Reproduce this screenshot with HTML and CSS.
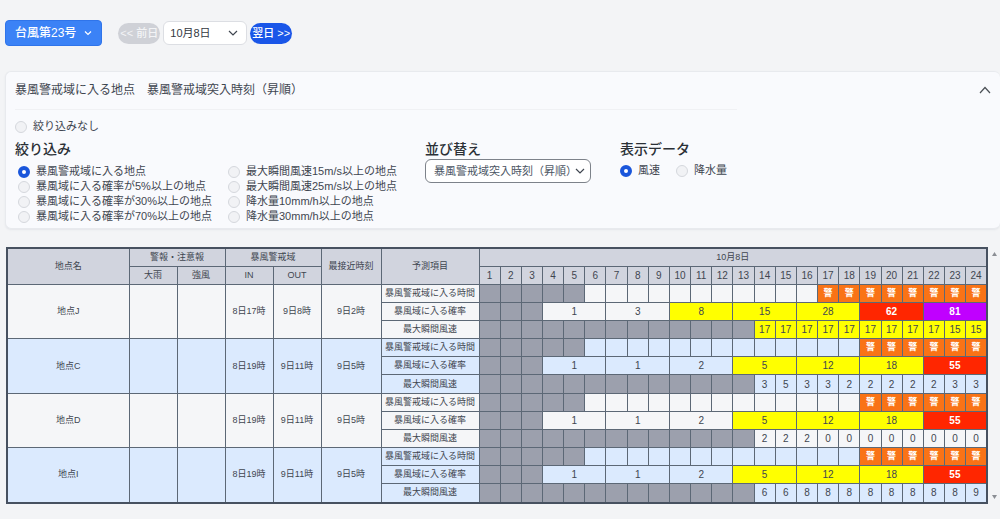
FILE: index.html
```html
<!DOCTYPE html>
<html lang="ja">
<head>
<meta charset="utf-8">
<meta name="viewport" content="width=device-width, initial-scale=1">
<title>台風第23号 暴風警戒域</title>
<link rel="stylesheet" href="styles.css">
</head>
<body>
<header class="toolbar">
  <button class="typhoon" type="button">台風第23号
    <svg class="typhoon-icon" viewBox="0 0 8 8" aria-hidden="true"><path d="M1 2.5 4 5.5 7 2.5"/></svg>
  </button>
  <nav class="days" aria-label="日付">
    <button class="pill" type="button" disabled>&lt;&lt; 前日</button>
    <span class="picker day-picker">
      <select aria-label="表示日"><option>10月8日</option></select>
      <svg class="picker-icon" viewBox="0 0 10 10" aria-hidden="true"><path d="M1 3 5 7 9 3"/></svg>
    </span>
    <button class="pill" type="button">翌日 &gt;&gt;</button>
  </nav>
</header>

<main>
<section class="panel">
  <div class="panel-head">
    <h1 class="panel-title">暴風警戒域に入る地点　暴風警戒域突入時刻（昇順）</h1>
    <button class="collapse" type="button" aria-label="閉じる"><svg viewBox="0 0 12 12" aria-hidden="true"><path d="M1 9 6 3.5 11 9"/></svg></button>
  </div>
  <hr class="rule">
  <label class="option"><input type="radio" name="filter">絞り込みなし</label>
  <div class="controls">
    <fieldset class="group">
      <legend class="group-title">絞り込み</legend>
      <div class="filters">
        <label class="option"><input type="radio" name="filter" checked>暴風警戒域に入る地点</label>
        <label class="option"><input type="radio" name="filter">暴風域に入る確率が5%以上の地点</label>
        <label class="option"><input type="radio" name="filter">暴風域に入る確率が30%以上の地点</label>
        <label class="option"><input type="radio" name="filter">暴風域に入る確率が70%以上の地点</label>
        <label class="option"><input type="radio" name="filter">最大瞬間風速15m/s以上の地点</label>
        <label class="option"><input type="radio" name="filter">最大瞬間風速25m/s以上の地点</label>
        <label class="option"><input type="radio" name="filter">降水量10mm/h以上の地点</label>
        <label class="option"><input type="radio" name="filter">降水量30mm/h以上の地点</label>
      </div>
    </fieldset>
    <div class="group">
      <label class="group-title" for="sort">並び替え</label>
      <span class="picker sort-picker">
        <select id="sort"><option>暴風警戒域突入時刻（昇順）</option></select>
        <svg class="picker-icon" viewBox="0 0 10 10" aria-hidden="true"><path d="M1 3 5 7 9 3"/></svg>
      </span>
    </div>
    <fieldset class="group">
      <legend class="group-title">表示データ</legend>
      <div class="metrics">
        <label class="option"><input type="radio" name="metric" checked>風速</label>
        <label class="option"><input type="radio" name="metric">降水量</label>
      </div>
    </fieldset>
  </div>
</section>

<section class="board">
<table class="forecast">
<colgroup><col class="c-site"><col class="c-time" span="4"><col class="c-near"><col class="c-item"><col span="24"></colgroup>
<thead>
<tr><th rowspan="2">地点名</th><th colspan="2">警報・注意報</th><th colspan="2">暴風警戒域</th><th rowspan="2">最接近時刻</th><th rowspan="2">予測項目</th><th colspan="24">10月8日</th></tr>
<tr><th>大雨</th><th>強風</th><th>IN</th><th>OUT</th><th class="n">1</th><th class="n">2</th><th class="n">3</th><th class="n">4</th><th class="n">5</th><th class="n">6</th><th class="n">7</th><th class="n">8</th><th class="n">9</th><th class="n">10</th><th class="n">11</th><th class="n">12</th><th class="n">13</th><th class="n">14</th><th class="n">15</th><th class="n">16</th><th class="n">17</th><th class="n">18</th><th class="n">19</th><th class="n">20</th><th class="n">21</th><th class="n">22</th><th class="n">23</th><th class="n">24</th></tr>
</thead>
<tbody>
<tr><th rowspan="3">地点J</th><td rowspan="3"></td><td rowspan="3"></td><td rowspan="3">8日17時</td><td rowspan="3">9日8時</td><td rowspan="3">9日2時</td><th>暴風警戒域に入る時間</th>
<td class="p"></td><td class="p"></td><td class="p"></td><td class="p"></td><td class="p"></td><td></td><td></td><td></td><td></td><td></td><td></td><td></td><td></td><td></td><td></td><td></td><td class="w">警</td><td class="w">警</td><td class="w">警</td><td class="w">警</td><td class="w">警</td><td class="w">警</td><td class="w">警</td><td class="w">警</td></tr>
<tr><th>暴風域に入る確率</th><td class="p"></td><td class="p"></td><td class="p"></td><td class="n" colspan="3">1</td><td class="n" colspan="3">3</td><td class="n mid" colspan="3">8</td><td class="n mid" colspan="3">15</td><td class="n mid" colspan="3">28</td><td class="n high" colspan="3">62</td><td class="n extreme" colspan="3">81</td></tr>
<tr><th>最大瞬間風速</th><td class="p"></td><td class="p"></td><td class="p"></td><td class="p"></td><td class="p"></td><td class="p"></td><td class="p"></td><td class="p"></td><td class="p"></td><td class="p"></td><td class="p"></td><td class="p"></td><td class="p"></td><td class="n mid">17</td><td class="n mid">17</td><td class="n mid">17</td><td class="n mid">17</td><td class="n mid">17</td><td class="n mid">17</td><td class="n mid">17</td><td class="n mid">17</td><td class="n mid">17</td><td class="n mid">15</td><td class="n mid">15</td></tr>
</tbody>
<tbody class="alt">
<tr><th rowspan="3">地点C</th><td rowspan="3"></td><td rowspan="3"></td><td rowspan="3">8日19時</td><td rowspan="3">9日11時</td><td rowspan="3">9日5時</td><th>暴風警戒域に入る時間</th>
<td class="p"></td><td class="p"></td><td class="p"></td><td class="p"></td><td class="p"></td><td></td><td></td><td></td><td></td><td></td><td></td><td></td><td></td><td></td><td></td><td></td><td></td><td></td><td class="w">警</td><td class="w">警</td><td class="w">警</td><td class="w">警</td><td class="w">警</td><td class="w">警</td></tr>
<tr><th>暴風域に入る確率</th><td class="p"></td><td class="p"></td><td class="p"></td><td class="n" colspan="3">1</td><td class="n" colspan="3">1</td><td class="n" colspan="3">2</td><td class="n mid" colspan="3">5</td><td class="n mid" colspan="3">12</td><td class="n mid" colspan="3">18</td><td class="n high" colspan="3">55</td></tr>
<tr><th>最大瞬間風速</th><td class="p"></td><td class="p"></td><td class="p"></td><td class="p"></td><td class="p"></td><td class="p"></td><td class="p"></td><td class="p"></td><td class="p"></td><td class="p"></td><td class="p"></td><td class="p"></td><td class="p"></td><td class="n">3</td><td class="n">5</td><td class="n">3</td><td class="n">3</td><td class="n">2</td><td class="n">2</td><td class="n">2</td><td class="n">2</td><td class="n">2</td><td class="n">3</td><td class="n">3</td></tr>
</tbody>
<tbody>
<tr><th rowspan="3">地点D</th><td rowspan="3"></td><td rowspan="3"></td><td rowspan="3">8日19時</td><td rowspan="3">9日11時</td><td rowspan="3">9日5時</td><th>暴風警戒域に入る時間</th>
<td class="p"></td><td class="p"></td><td class="p"></td><td class="p"></td><td class="p"></td><td></td><td></td><td></td><td></td><td></td><td></td><td></td><td></td><td></td><td></td><td></td><td></td><td></td><td class="w">警</td><td class="w">警</td><td class="w">警</td><td class="w">警</td><td class="w">警</td><td class="w">警</td></tr>
<tr><th>暴風域に入る確率</th><td class="p"></td><td class="p"></td><td class="p"></td><td class="n" colspan="3">1</td><td class="n" colspan="3">1</td><td class="n" colspan="3">2</td><td class="n mid" colspan="3">5</td><td class="n mid" colspan="3">12</td><td class="n mid" colspan="3">18</td><td class="n high" colspan="3">55</td></tr>
<tr><th>最大瞬間風速</th><td class="p"></td><td class="p"></td><td class="p"></td><td class="p"></td><td class="p"></td><td class="p"></td><td class="p"></td><td class="p"></td><td class="p"></td><td class="p"></td><td class="p"></td><td class="p"></td><td class="p"></td><td class="n">2</td><td class="n">2</td><td class="n">2</td><td class="n">0</td><td class="n">0</td><td class="n">0</td><td class="n">0</td><td class="n">0</td><td class="n">0</td><td class="n">0</td><td class="n">0</td></tr>
</tbody>
<tbody class="alt">
<tr><th rowspan="3">地点I</th><td rowspan="3"></td><td rowspan="3"></td><td rowspan="3">8日19時</td><td rowspan="3">9日11時</td><td rowspan="3">9日5時</td><th>暴風警戒域に入る時間</th>
<td class="p"></td><td class="p"></td><td class="p"></td><td class="p"></td><td class="p"></td><td></td><td></td><td></td><td></td><td></td><td></td><td></td><td></td><td></td><td></td><td></td><td></td><td></td><td class="w">警</td><td class="w">警</td><td class="w">警</td><td class="w">警</td><td class="w">警</td><td class="w">警</td></tr>
<tr><th>暴風域に入る確率</th><td class="p"></td><td class="p"></td><td class="p"></td><td class="n" colspan="3">1</td><td class="n" colspan="3">1</td><td class="n" colspan="3">2</td><td class="n mid" colspan="3">5</td><td class="n mid" colspan="3">12</td><td class="n mid" colspan="3">18</td><td class="n high" colspan="3">55</td></tr>
<tr><th>最大瞬間風速</th><td class="p"></td><td class="p"></td><td class="p"></td><td class="p"></td><td class="p"></td><td class="p"></td><td class="p"></td><td class="p"></td><td class="p"></td><td class="p"></td><td class="p"></td><td class="p"></td><td class="p"></td><td class="n">6</td><td class="n">6</td><td class="n">8</td><td class="n">8</td><td class="n">8</td><td class="n">8</td><td class="n">8</td><td class="n">8</td><td class="n">8</td><td class="n">8</td><td class="n">9</td></tr>
</tbody>
</table>
<div class="scroll" aria-hidden="true">
  <svg viewBox="0 0 5 4"><path d="M0 4 2.5 0 5 4z"/></svg>
  <svg viewBox="0 0 5 4"><path d="M0 0 2.5 4 5 0z"/></svg>
</div>
</section>
</main>
</body>
</html>
```

FILE: styles.css
```css
* {
  box-sizing: border-box;
}

body {
  margin: 0;
  padding: 20px 0 16px 5px;
  background: #f3f4f6;
  color: #3f4650;
  font: 11px/15px "Liberation Sans", "Noto Sans CJK JP", sans-serif;
}

button,
select {
  font: inherit;
  cursor: pointer;
}

svg {
  display: block;
  fill: none;
  stroke: currentColor;
  stroke-width: 1.2;
}

/* Toolbar */
.toolbar {
  display: flex;
  align-items: center;
  gap: 16px;
}

.typhoon {
  display: flex;
  align-items: center;
  gap: 8px;
  height: 26px;
  padding: 0 9px;
  border: 1px solid #2f74ea;
  border-radius: 4px;
  background: #3b82f6;
  color: #fff;
  font-size: 12px;
  font-weight: 500;
}

.typhoon-icon {
  width: 8px;
  height: 8px;
}

.days {
  display: flex;
  align-items: center;
  gap: 3px;
}

.pill {
  height: 21px;
  padding: 0 2px;
  border: 0;
  border-radius: 11px;
  background: #1a56e8;
  color: #fff;
  font-weight: 500;
  white-space: nowrap;
}

.pill:disabled {
  background: #cfd1d7;
  color: #f3f4f6;
  cursor: default;
}

.picker {
  position: relative;
  display: block;
}

.picker select {
  display: block;
  width: 100%;
  height: 24px;
  padding: 0 8px 0 6px;
  border: 1px solid #dcdee3;
  border-radius: 6px;
  background: #fff;
  color: #33383f;
  appearance: none;
}

.picker-icon {
  position: absolute;
  top: 7px;
  right: 9px;
  width: 10px;
  height: 10px;
  pointer-events: none;
}

.day-picker {
  width: 84px;
}

.sort-picker {
  width: 166px;
}

.sort-picker select {
  border-color: #7d828a;
  padding: 0 0 0 8px;
  color: #4b5563;
}

.sort-picker .picker-icon {
  right: 6px;
}

/* Conditions panel */
.panel {
  margin-top: 25px;
  padding: 8px 9px 4px;
  border: 1px solid #e8eaee;
  border-right: 0;
  border-radius: 6px;
  background: #f9fafd;
  box-shadow: 0 1px 2px #e4e6ea;
}

.panel-head {
  display: flex;
  align-items: center;
  justify-content: space-between;
}

.panel-title {
  margin: 0;
  font-size: 12px;
  line-height: 20px;
  font-weight: 400;
}

.collapse {
  padding: 0;
  border: 0;
  background: none;
  color: #4b5056;
}

.collapse svg {
  width: 12px;
  height: 12px;
}

.rule {
  width: 74%;
  margin: 9px 0;
  border: 0;
  border-top: 1px solid #f0f1f4;
}

.option {
  display: flex;
  align-items: center;
  gap: 6px;
  white-space: nowrap;
}

.option input {
  appearance: none;
  flex: none;
  width: 12px;
  height: 12px;
  margin: 0;
  border: 1px solid #d5d8dd;
  border-radius: 50%;
  background: #f1f2f5;
}

.option input:checked {
  border: 4px solid #1a56db;
  background: #fff;
}

.controls {
  display: grid;
  grid-template-columns: 42fr 20fr 38fr;
  margin-top: 5px;
}

.group {
  min-width: 0;
  margin: 0;
  padding: 0;
  border: 0;
}

.group-title {
  display: block;
  padding: 0;
  color: #2b3036;
  font-size: 14px;
  line-height: 20px;
  font-weight: 500;
}

.filters {
  display: grid;
  grid-template-rows: repeat(4, 15px);
  grid-auto-flow: column;
  grid-auto-columns: 210px;
  padding: 5px 0 0 3px;
}

.metrics {
  display: flex;
  gap: 16px;
  padding-top: 4px;
}

/* Forecast table */
.board {
  display: flex;
  margin-top: 18px;
  padding-left: 1px;
}

.forecast {
  flex: 1;
  width: 100%;
  table-layout: fixed;
  border-collapse: collapse;
  border: 2px solid #475160;
  font-size: 9px;
  line-height: 17px;
  text-align: center;
}

.c-site { width: 122px; }
.c-time { width: 48px; }
.c-near { width: 60px; }
.c-item { width: 98px; }

.forecast th,
.forecast td {
  height: 18px;
  padding: 0;
  border: 1px solid #5c6876;
  font-weight: 400;
  white-space: nowrap;
}

.forecast .n {
  font-size: 10px;
}

.forecast thead th {
  background: #d1d4de;
}

.forecast tbody {
  background: #f5f6f8;
}

.forecast .alt {
  background: #dbeafe;
}

.forecast .alt tr:last-child > * {
  height: 19px;
}

.forecast .p {
  background: #9ca0ad;
}

.forecast .w {
  background: #f97316;
  color: #fff;
  font-weight: 700;
}

.forecast .mid {
  background: #ff0;
}

.forecast .high,
.forecast .extreme {
  background: #ff2600;
  color: #fff;
  font-weight: 700;
}

.forecast .extreme {
  background: #c000ff;
}

.scroll {
  display: flex;
  flex-direction: column;
  justify-content: space-between;
  align-items: center;
  width: 12px;
  padding: 5px 0;
}

.scroll svg {
  width: 5px;
  height: 4px;
  fill: #8b8e94;
  stroke: none;
}
```
